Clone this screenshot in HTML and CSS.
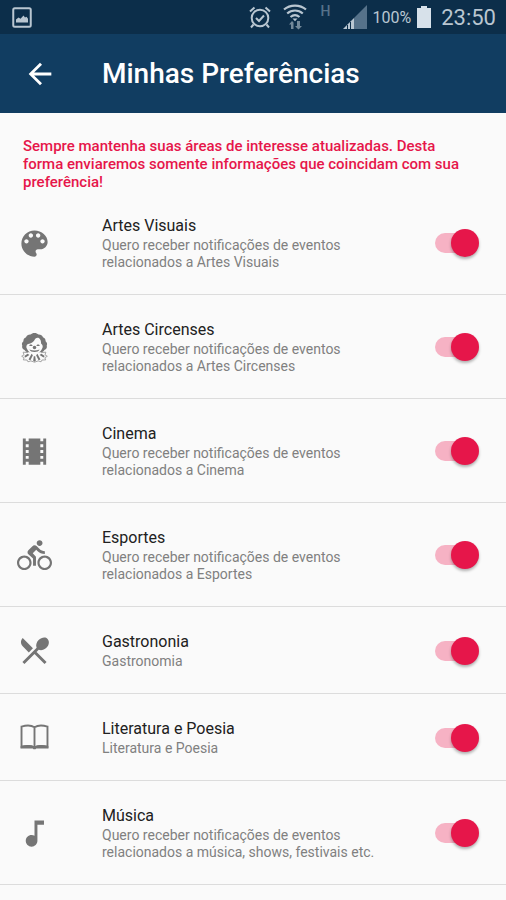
FILE: index.html
```html
<!DOCTYPE html>
<html lang="pt-BR">
<head>
<meta charset="UTF-8">
<meta name="viewport" content="width=device-width, initial-scale=1.0">
<title>Minhas Preferências</title>
<link rel="stylesheet" href="styles.css">
</head>
<body>

<div class="status-bar">
    <svg class="status-image" width="20" height="21" viewBox="0 0 20 21">
        <rect x="1.25" y="1.25" width="17.5" height="18.5" rx="1.5" fill="none" stroke="currentColor" stroke-width="2"/>
        <path fill="currentColor" d="M4 15.500v-3l2.500-2 2 1.300 3-3.300 1.500 2 1.500-.7 1.500 2v3.700z"/>
    </svg>
    <div class="status-right">
        <svg width="22" height="23" viewBox="0 0 22 23" fill="none" stroke="currentColor" stroke-width="2">
            <circle cx="11" cy="12" r="8.300"/>
            <path d="M1 5.500l4.500-4M21 5.500l-4.500-4M4.500 18.500l-2.500 3M17.500 18.500l2.500 3M7 12l3 3 5-5.500"/>
        </svg>
        <svg class="status-wifi" width="24" height="26" viewBox="0 0 24 26">
            <g fill="none" stroke="currentColor" stroke-width="2.200">
                <path d="M1 5.500c6-5.300 16-5.300 22 0"/>
                <path d="M4.200 9.500c4.500-4 11.100-4 15.600 0"/>
                <path d="M7.500 13c2.700-2.300 6.300-2.300 9 0"/>
            </g>
            <path fill="currentColor" d="M9.500 14.500h5L12 17.200z"/>
            <path opacity=".6" fill="currentColor" d="M8 25v-4.500H6l3-3.500 1.500 1.500V25zM14 17v5h-2l3.500 3.500L19 22h-2v-5z"/>
        </svg>
        <span class="status-network">H</span>
        <svg class="status-signal" width="24" height="24" viewBox="0 0 24 24">
            <path fill="#56728a" d="M24 0v24H11V13z"/>
            <path fill="currentColor" d="M11 13v11H0z"/>
            <path fill="#0c2e4a" d="M4 20h1v4H4zM7 17h1v7H7z"/>
        </svg>
        <span class="status-percent">100%</span>
        <svg width="14" height="22" viewBox="0 0 14 22">
            <path fill="#d7e1ea" d="M4 0h6v2h4v20H0V2h4z"/>
        </svg>
        <span class="status-time">23:50</span>
    </div>
</div>

<header class="toolbar">
    <button class="back" aria-label="Voltar">
        <svg width="34" height="34" viewBox="0 0 24 24"><path fill="currentColor" d="M20 11H7.830l5.590-5.590L12 4l-8 8 8 8 1.410-1.410L7.830 13H20v-2z"/></svg>
    </button>
    <h1>Minhas Preferências</h1>
</header>

<main>
    <p class="notice">Sempre mantenha suas áreas de interesse atualizadas. Desta forma enviaremos somente informações que coincidam com sua preferência!</p>

    <ul class="preferences">
        <li>
            <label class="preference">
                <svg class="icon" viewBox="0 0 24 24"><path d="M12 3c-4.970 0-9 4.030-9 9s4.030 9 9 9c.83 0 1.500-.67 1.500-1.500 0-.39-.15-.74-.39-1.010-.23-.26-.38-.61-.38-.99 0-.83.67-1.500 1.500-1.500H16c2.760 0 5-2.240 5-5 0-4.420-4.030-8-9-8zm-5.500 9c-.83 0-1.500-.67-1.500-1.500S5.670 9 6.500 9 8 9.670 8 10.500 7.330 12 6.500 12zm3-4C8.670 8 8 7.330 8 6.500S8.670 5 9.500 5s1.500.67 1.500 1.500S10.330 8 9.500 8zm5 0c-.83 0-1.500-.67-1.500-1.500S13.670 5 14.500 5s1.500.67 1.500 1.500S15.330 8 14.500 8zm3 4c-.83 0-1.500-.67-1.500-1.500S16.670 9 17.500 9s1.500.67 1.500 1.500-.67 1.500-1.500 1.500z"/></svg>
                <span class="text">
                    <span class="name">Artes Visuais</span>
                    <span class="description">Quero receber notificações de eventos relacionados a Artes Visuais</span>
                </span>
                <input class="switch" type="checkbox" checked>
            </label>
        </li>
        <li>
            <label class="preference">
                <svg class="icon" viewBox="0 0 24 24">
                    <path d="M12 2c1.200 0 2 .4 2.700 1.100 1.500-.1 2.600.6 3.100 1.800 1.300.5 1.900 1.500 1.800 2.800 1 .8 1.300 1.800.8 2.900.4 1.500-.2 2.600-1.600 3.100-.7 1.200-1.700 1.700-3 1.500H8.200c-1.300.2-2.300-.3-3-1.500-1.400-.5-2-1.600-1.600-3.100-.5-1.100-.2-2.100.8-2.900-.1-1.300.5-2.300 1.800-2.800.5-1.200 1.600-1.900 3.100-1.800C10 2.400 10.800 2 12 2z"/>
                    <path fill="#fafafa" d="M12.500 6c2.200-2 4.200.4 4 3.200 1.300 1 1.500 2.500.6 3.800-.9 2.200-2.600 3-5.100 3s-4.200-.8-5.100-3c-.9-1.300-.5-2.900.7-3.400 2-.2 3.900-1.400 4.900-3.600z"/>
                    <path d="M8.400 11c.3-1.300 2-1.300 2.300 0zM13.300 11c.3-1.300 2-1.300 2.300 0zM8.500 13.300c2.200 1 4.800 1 7 0-.8 2.300-6.200 2.300-7 0z"/>
                    <circle cx="12" cy="12" r="1.200"/>
                    <path fill="none" stroke="#9a9a9a" stroke-width=".6" d="M7.500 15.500l-3.300-.3.600 1.800-1.600 1 1.700 1-.6 1.500 2.600.1.600 1.200 2-.6 2.500.9 2.500-.9 2 .6.600-1.200 2.600-.1-.6-1.500 1.700-1-1.600-1 .6-1.800-3.300.3"/>
                    <path d="M10 16.300l.9 1L9.200 20.800l-1.300-.6zM14 16.300l-.9 1 1.700 3.500 1.300-.6zM11.500 18h1l.4 3-.9.800-.9-.8zM7.300 16.300l-2.300 1.500.8 1 2.700-1.700zM16.700 16.300l2.300 1.500-.8 1-2.700-1.700z"/>
                </svg>
                <span class="text">
                    <span class="name">Artes Circenses</span>
                    <span class="description">Quero receber notificações de eventos relacionados a Artes Circenses</span>
                </span>
                <input class="switch" type="checkbox" checked>
            </label>
        </li>
        <li>
            <label class="preference">
                <svg class="icon" viewBox="0 0 24 24"><path d="M18 3v2h-2V3H8v2H6V3H4v18h2v-2h2v2h8v-2h2v2h2V3h-2zM8 17H6v-2h2v2zm0-4H6v-2h2v2zm0-4H6V7h2v2zm10 8h-2v-2h2v2zm0-4h-2v-2h2v2zm0-4h-2V7h2v2z"/></svg>
                <span class="text">
                    <span class="name">Cinema</span>
                    <span class="description">Quero receber notificações de eventos relacionados a Cinema</span>
                </span>
                <input class="switch" type="checkbox" checked>
            </label>
        </li>
        <li>
            <label class="preference">
                <svg class="icon" viewBox="0 0 24 24"><path d="M15.500 5.500c1.100 0 2-.9 2-2s-.9-2-2-2-2 .9-2 2 .9 2 2 2zM5 12c-2.800 0-5 2.200-5 5s2.200 5 5 5 5-2.200 5-5-2.200-5-5-5zm0 8.500c-1.900 0-3.500-1.600-3.500-3.500s1.600-3.500 3.500-3.500 3.500 1.600 3.500 3.500-1.600 3.500-3.500 3.500zm5.800-10l2.400-2.400.8.8c1.300 1.300 3 2.100 5.100 2.100V9c-1.500 0-2.700-.6-3.600-1.500l-1.900-1.900c-.5-.4-1-.6-1.600-.6s-1.100.2-1.400.6L7.800 8.400c-.4.4-.6.9-.6 1.400 0 .6.2 1.100.6 1.400L11 14v5h2v-6.200l-2.200-2.300zM19 12c-2.800 0-5 2.200-5 5s2.200 5 5 5 5-2.200 5-5-2.200-5-5-5zm0 8.500c-1.900 0-3.500-1.600-3.500-3.500s1.600-3.500 3.500-3.500 3.500 1.600 3.500 3.500-1.600 3.500-3.500 3.500z"/></svg>
                <span class="text">
                    <span class="name">Esportes</span>
                    <span class="description">Quero receber notificações de eventos relacionados a Esportes</span>
                </span>
                <input class="switch" type="checkbox" checked>
            </label>
        </li>
        <li>
            <label class="preference">
                <svg class="icon" viewBox="0 0 24 24"><path d="M8.100 13.340l2.830-2.830L3.910 3.500c-1.560 1.560-1.560 4.090 0 5.660l4.190 4.180zm6.780-1.810c1.530.71 3.680.21 5.270-1.380 1.910-1.910 2.280-4.650.81-6.120-1.460-1.460-4.200-1.100-6.120.81-1.590 1.590-2.090 3.740-1.380 5.270L3.700 19.870l1.410 1.410L12 14.410l6.880 6.880 1.410-1.410L13.410 13l1.470-1.470z"/></svg>
                <span class="text">
                    <span class="name">Gastrononia</span>
                    <span class="description">Gastronomia</span>
                </span>
                <input class="switch" type="checkbox" checked>
            </label>
        </li>
        <li>
            <label class="preference">
                <svg class="icon" viewBox="0 0 24 24">
                    <path fill="none" stroke="#757575" stroke-width="1.300" d="M12 5C10 3.700 6 3.700 3.100 4.500v14c3-.7 6.900-.7 8.900.3 2-1 5.900-1 8.900-.3v-14C18 3.700 14 3.700 12 5zM12 5v14"/>
                    <path d="M2.500 17.800c3-.9 7-.9 9.500.3 2.500-1.200 6.500-1.200 9.500-.3v1.700h-8.300c-.5.8-1.900.8-2.400 0H2.500z"/>
                </svg>
                <span class="text">
                    <span class="name">Literatura e Poesia</span>
                    <span class="description">Literatura e Poesia</span>
                </span>
                <input class="switch" type="checkbox" checked>
            </label>
        </li>
        <li>
            <label class="preference">
                <svg class="icon" viewBox="0 0 24 24"><path d="M12 3v10.550c-.59-.34-1.270-.55-2-.55-2.210 0-4 1.790-4 4s1.790 4 4 4 4-1.790 4-4V6h4.500V3z"/></svg>
                <span class="text">
                    <span class="name">Música</span>
                    <span class="description">Quero receber notificações de eventos relacionados a música, shows, festivais etc.</span>
                </span>
                <input class="switch" type="checkbox" checked>
            </label>
        </li>
    </ul>
</main>

</body>
</html>
```

FILE: styles.css
```css
body {
    margin: 0;
    background-color: #fafafa;
    font-family: Roboto, "Liberation Sans", sans-serif;
}
svg {
    display: block;
    flex-shrink: 0;
}

/* status bar */
.status-bar {
    display: flex;
    align-items: center;
    justify-content: space-between;
    height: 34px;
    padding: 0 10px 0 12px;
    background-color: #0c2e4a;
    color: #b9c6d1;
}
.status-right {
    display: flex;
    align-items: center;
    gap: 6px;
}
.status-wifi {
    margin-left: 6px;
}
.status-network {
    margin-left: 8px;
    padding-bottom: 12px;
    font-size: 14px;
    line-height: 14px;
    font-weight: 500;
    color: #56728a;
}
.status-signal {
    margin-left: 6px;
}
.status-percent {
    font-size: 16px;
}
.status-time {
    margin-left: 4px;
    font-size: 22px;
}

/* toolbar */
.toolbar {
    display: flex;
    align-items: center;
    gap: 45px;
    height: 79px;
    padding: 0 23px;
    background-color: #113d61;
    color: #fff;
}
.toolbar h1 {
    margin: 0;
    font-size: 28px;
    font-weight: 500;
}
.back {
    padding: 0;
    border: none;
    background: none;
    color: inherit;
    cursor: pointer;
}

.notice {
    margin: 0;
    padding: 24px 40px 0 23px;
    font-size: 15px;
    line-height: 18px;
    font-weight: 500;
    color: #e6164a;
}

/* preferences */
.preferences {
    margin: 0;
    padding: 0;
    list-style: none;
}
.preference {
    display: flex;
    align-items: center;
    padding: 24px 33px 23px 17px;
    border-bottom: 1px solid #dcdcdc;
    cursor: pointer;
}
.icon {
    width: 35px;
    height: 35px;
    margin-right: 50px;
    fill: #757575;
}
.text {
    flex: 1;
    margin-right: 32px;
}
.name {
    display: block;
    font-size: 16px;
    line-height: 22px;
    color: #212121;
}
.description {
    display: block;
    font-size: 14px;
    line-height: 17px;
    color: #808080;
}

.switch {
    position: relative;
    flex-shrink: 0;
    appearance: none;
    width: 38px;
    height: 20px;
    margin: 0;
    border-radius: 10px;
    background-color: #bdbdbd;
    cursor: pointer;
}
.switch::before {
    content: "";
    position: absolute;
    top: -4px;
    left: -6px;
    width: 28px;
    height: 28px;
    border-radius: 50%;
    background-color: #fff;
    box-shadow: 0 2px 3px rgba(0,0,0,0.3);
}
.switch:checked {
    background-color: #f6b2c4;
}
.switch:checked::before {
    left: auto;
    right: -6px;
    background-color: #e6164a;
}
```
